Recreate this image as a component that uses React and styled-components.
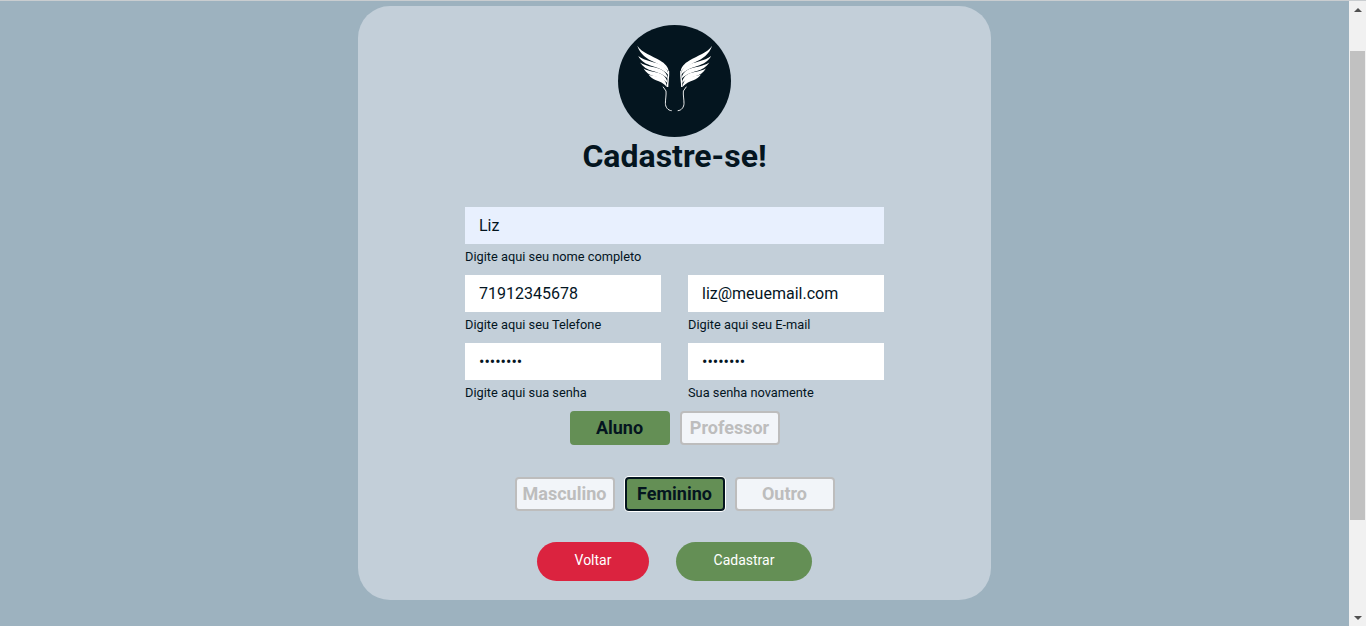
import styled, { createGlobalStyle } from "styled-components";

const GlobalStyle = createGlobalStyle`
  body {
    margin: 0;
    font-family: Roboto, sans-serif;
  }
  * {
    box-sizing: border-box;
  }
`;

const Screen = styled.div`
  display: flex;
  height: 626px;
  overflow: hidden;
  background: #9db2bf;
  border-top: 1px solid #c9cdd0;
`;

const Main = styled.main`
  flex: 1;
  display: flex;
  justify-content: center;
  padding-top: 5px;
`;

const ScrollBar = styled.div`
  width: 17px;
  display: flex;
  flex-direction: column;
  align-items: center;
  background: #f1f1f1;
`;

const ScrollArrow = styled.div`
  height: 17px;
  width: 100%;
  display: flex;
  align-items: center;
  justify-content: center;
  flex-shrink: 0;
`;

const ArrowShape = styled.span`
  width: 0;
  height: 0;
  border-left: 4px solid transparent;
  border-right: 4px solid transparent;
  ${(p) => (p.$down ? "border-top: 4px solid #505050;" : "border-bottom: 4px solid #505050;")}
`;

const ScrollTrack = styled.div`
  flex: 1;
  width: 100%;
  padding-top: 33px;
`;

const ScrollThumb = styled.div`
  height: 469px;
  width: 15px;
  margin: 0 auto;
  background: #c1c1c1;
`;

const Card = styled.form`
  width: 633px;
  height: 594px;
  padding-top: 19px;
  border-radius: 32px;
  background: #c3cfd9;
  display: flex;
  flex-direction: column;
  align-items: center;
`;

const LogoCircle = styled.svg`
  width: 113px;
  height: 112px;
  flex-shrink: 0;
  display: block;
`;

const Title = styled.h1`
  margin: 1px 0 32px;
  height: 37px;
  font-size: 32px;
  line-height: 37px;
  font-weight: 700;
  color: #04151f;
`;

const Fields = styled.div`
  width: 419px;
  display: grid;
  grid-template-columns: 196px 196px;
  justify-content: space-between;
  row-gap: 11px;
`;

const Field = styled.label`
  display: flex;
  flex-direction: column;
  grid-column: ${(p) => (p.$wide ? "1 / -1" : "auto")};
`;

const Input = styled.input`
  width: 100%;
  height: 37px;
  border: 0;
  outline: 0;
  padding: 0 14px;
  font-family: Roboto, sans-serif;
  font-size: 16px;
  color: #04151f;
  background: ${(p) => (p.$filled ? "#e8f0fe" : "#fff")};
`;

const Hint = styled.span`
  height: 20px;
  padding-top: 5px;
  font-size: 12.8px;
  line-height: 15px;
  color: #04151f;
`;

const ChoiceRow = styled.div`
  display: flex;
  justify-content: center;
  gap: 10px;
  margin-top: ${(p) => p.$top}px;
`;

const Choice = styled.button`
  width: 100px;
  height: 34px;
  padding: 0 0 2px;
  border-radius: 4px;
  border: 2px solid ${(p) => (p.$active ? "#648f55" : "#bdbdbd")};
  background: ${(p) => (p.$active ? "#648f55" : "#f2f5f9")};
  color: ${(p) => (p.$active ? "#04151f" : "#bdbdbd")};
  font-family: Roboto, sans-serif;
  font-size: 18px;
  font-weight: 700;
  ${(p) =>
    p.$focused &&
    `
    border-color: #04151f;
    box-shadow: 0 0 0 1px #fff;
  `}
`;

const Actions = styled.div`
  display: flex;
  justify-content: center;
  gap: 27px;
  margin-top: 31px;
`;

const ActionButton = styled.button`
  width: ${(p) => p.$width}px;
  height: 39px;
  padding: 0 0 3px;
  border: 0;
  border-radius: 20px;
  background: ${(p) => p.$color};
  color: #fff;
  font-family: Roboto, sans-serif;
  font-size: 14px;
  font-weight: 400;
`;

const feathers = [
  "M19.3 20.7 C24 28 34 30.5 42 35.5 C47 38.5 50.5 42 50.8 47 C47 42 42 40 36 37 C29 34 22 29 19.3 20.7 Z",
  "M20.3 31 C27 36.5 37 36.5 44 40.5 C47.5 42.5 50 45 50.5 50 C46 44.8 40 43 34 41 C28 39 23 36.5 20.3 31 Z",
  "M22 37.5 C29 42 38 41.5 44 45 C47 47 49.5 49.5 50 54 C45.5 49.2 40 47.5 34.5 46 C29.5 44.5 25 42 22 37.5 Z",
  "M25.5 43.5 C32 47 39 46.5 44 49.5 C47 51.5 49 54 49.5 58 C45 53.7 40 52 35.5 51 C31.5 50 28 47.5 25.5 43.5 Z",
  "M30.5 49.5 C36 51.5 41 51 44.5 53.5 C47 55.5 48.5 58 49 62 C45.5 58.2 41.5 56.2 38 55.2 C35 54.2 32.5 52.5 30.5 49.5 Z",
];

const Wing = ({ flip }) => (
  <g transform={flip ? "matrix(-1 0 0 1 113.4 0)" : undefined}>
    {feathers.map((d) => (
      <path key={d} d={d} fill="#fff" />
    ))}
    <path
      d="M50.5 46 C51 52 49.5 57 49.6 62"
      fill="none"
      stroke="#fff"
      strokeWidth="1.4"
    />
    <path
      d="M45 61.7 L48 66 C48.4 70 47.4 74 47.4 78.3 C47.4 82 49.8 85.5 53.7 85.7"
      fill="none"
      stroke="#fff"
      strokeWidth="0.9"
    />
  </g>
);

const Logo = () => (
  <LogoCircle viewBox="0 0 113 112">
    <ellipse cx="56.5" cy="56" rx="56.5" ry="56" fill="#04151f" />
    <Wing />
    <Wing flip />
  </LogoCircle>
);

const App = () => (
  <>
    <GlobalStyle />
    <Screen>
      <Main>
        <Card>
          <Logo />
          <Title>Cadastre-se!</Title>
          <Fields>
            <Field $wide>
              <Input $filled defaultValue="Liz" />
              <Hint>Digite aqui seu nome completo</Hint>
            </Field>
            <Field>
              <Input defaultValue="71912345678" />
              <Hint>Digite aqui seu Telefone</Hint>
            </Field>
            <Field>
              <Input defaultValue="liz@meuemail.com" />
              <Hint>Digite aqui seu E-mail</Hint>
            </Field>
            <Field>
              <Input type="password" defaultValue="12345678" />
              <Hint>Digite aqui sua senha</Hint>
            </Field>
            <Field>
              <Input type="password" defaultValue="12345678" />
              <Hint>Sua senha novamente</Hint>
            </Field>
          </Fields>
          <ChoiceRow $top={11}>
            <Choice type="button" $active>Aluno</Choice>
            <Choice type="button">Professor</Choice>
          </ChoiceRow>
          <ChoiceRow $top={32}>
            <Choice type="button">Masculino</Choice>
            <Choice type="button" $active $focused>Feminino</Choice>
            <Choice type="button">Outro</Choice>
          </ChoiceRow>
          <Actions>
            <ActionButton type="button" $width={112} $color="#db233f">Voltar</ActionButton>
            <ActionButton type="button" $width={136} $color="#648f55">Cadastrar</ActionButton>
          </Actions>
        </Card>
      </Main>
      <ScrollBar>
        <ScrollArrow><ArrowShape /></ScrollArrow>
        <ScrollTrack><ScrollThumb /></ScrollTrack>
        <ScrollArrow><ArrowShape $down /></ScrollArrow>
      </ScrollBar>
    </Screen>
  </>
);

export default App;
